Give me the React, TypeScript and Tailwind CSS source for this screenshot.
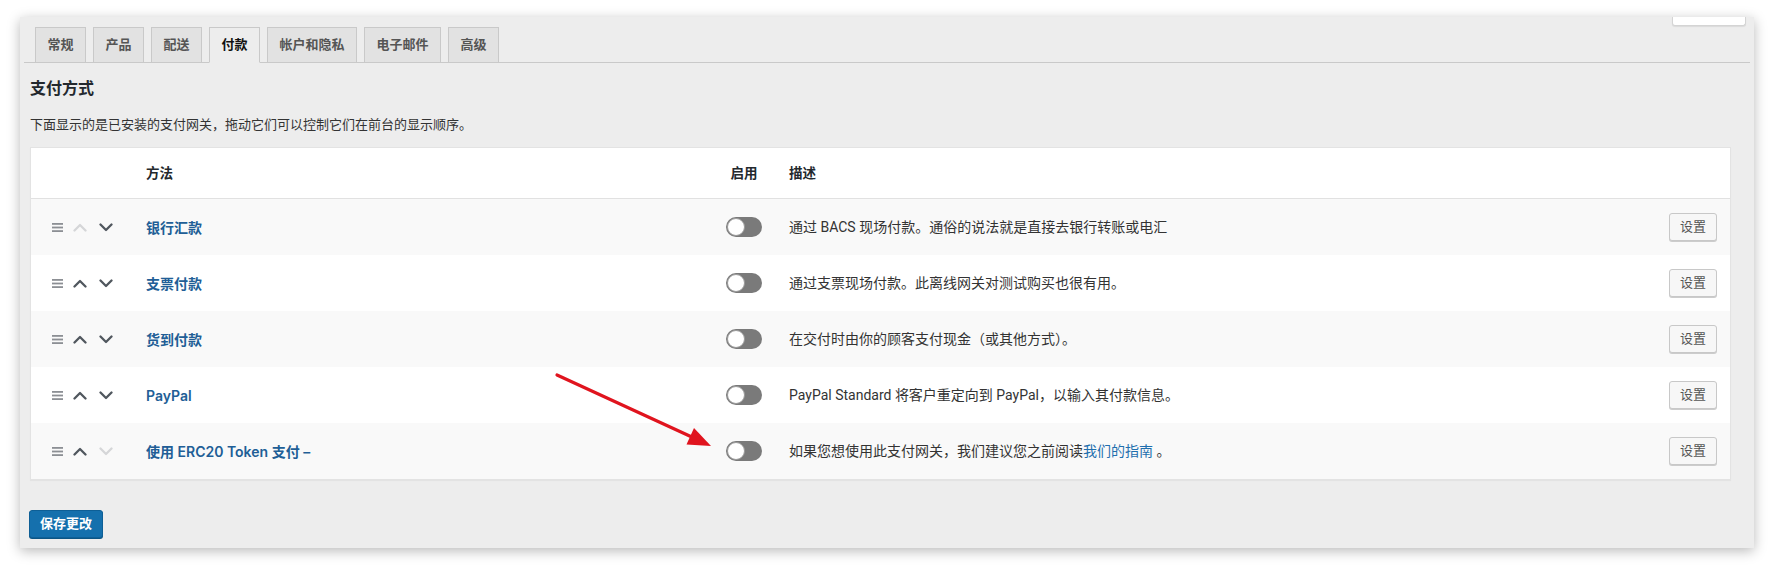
import React from "react";

const tabs = [
  { label: "常规" },
  { label: "产品" },
  { label: "配送" },
  { label: "付款", active: true },
  { label: "帐户和隐私" },
  { label: "电子邮件" },
  { label: "高级" },
];

type Gateway = {
  name: string;
  desc: React.ReactNode;
  upOff?: boolean;
  downOff?: boolean;
};

const gateways: Gateway[] = [
  { name: "银行汇款", desc: "通过 BACS 现场付款。通俗的说法就是直接去银行转账或电汇", upOff: true },
  { name: "支票付款", desc: "通过支票现场付款。此离线网关对测试购买也很有用。" },
  { name: "货到付款", desc: "在交付时由你的顾客支付现金（或其他方式）。" },
  { name: "PayPal", desc: "PayPal Standard 将客户重定向到 PayPal，以输入其付款信息。" },
  {
    name: "使用 ERC20 Token 支付 –",
    desc: (
      <>
        如果您想使用此支付网关，我们建议您之前阅读<a className="text-[#1f6fae]">我们的指南</a> 。
      </>
    ),
    downOff: true,
  },
];

function Handle() {
  return (
    <svg width="11" height="9" viewBox="0 0 11 9" className="shrink-0">
      <rect x="0" y="0" width="11" height="1.8" fill="#8c8f94" />
      <rect x="0" y="3.6" width="11" height="1.8" fill="#8c8f94" />
      <rect x="0" y="7.2" width="11" height="1.8" fill="#8c8f94" />
    </svg>
  );
}

function Chevron({ up, off }: { up?: boolean; off?: boolean }) {
  return (
    <svg width="14" height="9" viewBox="0 0 14 9" className="shrink-0">
      <polyline
        points={up ? "1.5,7.5 7,2 12.5,7.5" : "1.5,1.5 7,7 12.5,1.5"}
        fill="none"
        stroke={off ? "#d5d6d8" : "#50575e"}
        strokeWidth="2.3"
        strokeLinecap="round"
        strokeLinejoin="round"
      />
    </svg>
  );
}

function Toggle() {
  return (
    <div className="w-[36px] h-[20px] rounded-full bg-[#7a7a7a] p-[1px] flex items-center">
      <div className="w-[18px] h-[18px] rounded-full bg-white border border-[#9a9a9a]" />
    </div>
  );
}

export default function App() {
  return (
    <div className="relative w-[1774px] h-[570px] bg-white overflow-hidden pt-[17px] pl-[20px] [font-family:Inter,'Noto_Sans_CJK_SC',sans-serif] text-[#333]">
      <div className="w-[1734px] h-[531px] bg-[#ededed] shadow-[0_3px_12px_rgba(0,0,0,0.28)] flex flex-col">
        {/* top strip with cut-off help tab */}
        <div className="h-[10px] flex justify-end pr-[8px]">
          <div className="w-[74px] h-[9px] bg-white border border-t-0 border-[#d4d4d4] rounded-b-[3px] shadow-[0_1px_1px_rgba(0,0,0,0.08)]" />
        </div>

        {/* Tabs */}
        <div className="mx-[4px] pl-[11px] flex items-end gap-[7px] border-b border-[#c9c9c9] h-[36px]">
          {tabs.map((t) => (
            <div
              key={t.label}
              className={
                t.active
                  ? "h-[36px] -mb-px px-[11.5px] flex items-center text-[13px] font-semibold text-[#111] bg-[#ededed] border border-[#c9c9c9] border-b-[#ededed]"
                  : "h-[35px] px-[11.5px] flex items-center text-[13px] font-semibold text-[#555] bg-[#e2e2e2] border border-b-0 border-[#c9c9c9]"
              }
            >
              {t.label}
            </div>
          ))}
        </div>

        <div className="pl-[10px] pr-[23px]">
          <h2 className="mt-[14px] h-[22px] leading-[22px] text-[16px] font-semibold text-[#23282d]">支付方式</h2>
          <p className="mt-[15px] h-[20px] leading-[20px] text-[13px] text-[#333]">
            下面显示的是已安装的支付网关，拖动它们可以控制它们在前台的显示顺序。
          </p>

          {/* Gateways table */}
          <div className="mt-[13px] bg-white border border-[#e3e3e3] shadow-[0_1px_1px_rgba(0,0,0,0.04)]">
            <div className="h-[51px] flex items-center border-b border-[#e1e1e1] text-[13.5px] font-semibold text-[#23282d]">
              <div className="w-[115px]" />
              <div className="w-[558px]">方法</div>
              <div className="w-[80px] text-center">启用</div>
              <div className="flex-1 pl-[5px]">描述</div>
            </div>
            {gateways.map((g, i) => (
              <div
                key={g.name}
                className={`h-[56px] flex items-center ${i % 2 === 0 ? "bg-[#f9f9f9]" : "bg-white"}`}
              >
                <div className="w-[115px] pl-[21px] flex items-center">
                  <Handle />
                  <div className="ml-[10px]">
                    <Chevron up off={g.upOff} />
                  </div>
                  <div className="ml-[12px]">
                    <Chevron off={g.downOff} />
                  </div>
                </div>
                <div className="w-[558px] text-[14px] font-semibold text-[#215e96]">{g.name}</div>
                <div className="w-[80px] flex justify-center">
                  <Toggle />
                </div>
                <div className="flex-1 pl-[5px] text-[14px] text-[#333] [font-family:Roboto,'Noto_Sans_CJK_SC',sans-serif]">
                  {g.desc}
                </div>
                <div className="pr-[13px]">
                  <button className="w-[48px] h-[28px] rounded-[3px] bg-[#f7f7f7] border border-[#c8c8c8] shadow-[0_1px_0_#cccccc] text-[13px] text-[#555]">
                    设置
                  </button>
                </div>
              </div>
            ))}
          </div>

          <button className="mt-[30px] -ml-px w-[74px] h-[28px] rounded-[3px] bg-[#1570ad] border border-[#0e5f96] shadow-[0_1px_0_#0b5585] text-[13px] font-semibold text-white">
            保存更改
          </button>
        </div>
      </div>

      {/* red annotation arrow */}
      <svg className="absolute inset-0 pointer-events-none" width="1774" height="570" viewBox="0 0 1774 570">
        <line x1="557" y1="375" x2="694" y2="438" stroke="#e0141e" strokeWidth="3.2" strokeLinecap="round" />
        <polygon points="711,446 686.5,444.5 694,428" fill="#e0141e" />
      </svg>
    </div>
  );
}
